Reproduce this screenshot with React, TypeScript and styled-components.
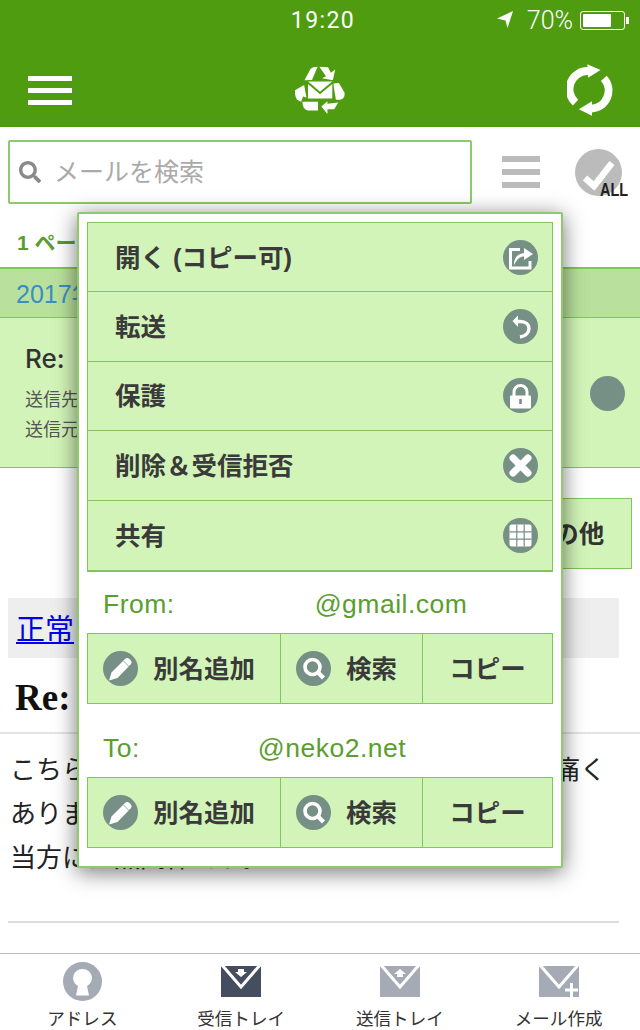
import React from 'react'
import styled, { createGlobalStyle } from 'styled-components'
import { FaSearch } from 'react-icons/fa'

const sans = `'Liberation Sans', 'Noto Sans CJK JP', sans-serif`
const serif = `'Liberation Serif', 'Noto Sans CJK JP', serif`
const badge = '#769085'

const GlobalStyle = createGlobalStyle`
  html, body {
    margin: 0;
    padding: 0;
    background: #fff;
    font-family: ${sans};
  }
  * { box-sizing: border-box; }
`

function RecycleLogo() {
  return (
    <LogoSvg viewBox="78 18 148 142">
      <g fill="#fff">
        <path d="M106 60 L124 27 Q130 20 145 20 L128 60 Z" />
        <path d="M150 20 L176 22 L184 38 L197 28 L190 60 L158 54 L170 48 L160 34 Z" />
        <path d="M191 70 L208 68 L224 96 Q228 112 212 118 L199 118 Z" />
        <path d="M100 124 L146 124 L146 150 L116 150 Q100 146 100 124 Z" />
        <path d="M156 138 L174 122 L174 130 L206 126 L194 146 L174 146 L174 160 Z" />
        <path d="M78 90 L105 74 L112 112 L102 108 L96 124 L84 118 Q76 104 78 90 Z" />
      </g>
      <path d="M115 62 H190 V116 H115 Z" fill="#fff" stroke="#4f9c10" strokeWidth="3" />
      <path d="M115 66 L152 98 L190 66" fill="none" stroke="#4f9c10" strokeWidth="6" />
    </LogoSvg>
  )
}

function RefreshIcon() {
  return (
    <RefreshSvg viewBox="36 25 140 157">
      <path d="M62 142 A55 55 0 0 1 102 46" fill="none" stroke="#fff" strokeWidth="24" />
      <path d="M148 68 A55 55 0 0 1 110 160" fill="none" stroke="#fff" strokeWidth="24" />
      <path d="M98 25 L138 43 L100 66 Z" fill="#fff" />
      <path d="M112 138 L72 162 L112 182 Z" fill="#fff" />
    </RefreshSvg>
  )
}

function LocationIcon() {
  return (
    <svg width="17" height="18" viewBox="0 0 17 18">
      <path d="M16 0 L0 7.5 L8.5 9.5 L10.5 17 Z" fill="#fff" />
    </svg>
  )
}

function CheckMark() {
  return (
    <svg width="47" height="47" viewBox="0 0 47 47">
      <path d="M10 29 L19 37 L37 14" fill="none" stroke="#fff" strokeWidth="6.5" />
    </svg>
  )
}

function ShareGlyph() {
  return (
    <svg width="35" height="35" viewBox="0 0 35 35">
      <path d="M17 9.5 H7.5 V28 H27 V21" fill="none" stroke="#fff" strokeWidth="3" />
      <path d="M11 25 C11 17 15 14 21 13 V8 L30 14 L21 20 V16.5 C17 16.5 14 19 11 25 Z" fill="#fff" />
    </svg>
  )
}

function ReplyGlyph() {
  return (
    <svg width="35" height="35" viewBox="0 0 35 35">
      <path d="M13 12.5 H17 C29 12.5 29 26 17 28" fill="none" stroke="#fff" strokeWidth="3.5" />
      <path d="M9.5 12 L15 6.5 V18 Z" fill="#fff" />
    </svg>
  )
}

function LockGlyph() {
  return (
    <svg width="35" height="35" viewBox="0 0 35 35">
      <path d="M11 18 V14 A6.5 6.5 0 0 1 24 14 V18" fill="none" stroke="#fff" strokeWidth="3" />
      <rect x="7" y="17.5" width="21" height="13" rx="1" fill="#fff" />
      <path d="M17.5 21 V26" stroke={badge} strokeWidth="2.6" />
    </svg>
  )
}

function CloseGlyph() {
  return (
    <svg width="35" height="35" viewBox="0 0 35 35">
      <path d="M10 10 L25 25 M25 10 L10 25" stroke="#fff" strokeWidth="7" strokeLinecap="round" />
    </svg>
  )
}

function GridGlyph() {
  return (
    <svg width="35" height="35" viewBox="0 0 35 35">
      <rect x="6.5" y="6.5" width="22" height="22" rx="2" fill="#fff" />
      <path d="M13.8 6.5 V28.5 M21.2 6.5 V28.5 M6.5 13.8 H28.5 M6.5 21.2 H28.5" stroke={badge} strokeWidth="1.2" />
    </svg>
  )
}

function PencilGlyph() {
  return (
    <svg width="35" height="35" viewBox="0 0 35 35">
      <path d="M6 29.5 L8.5 21.5 L22 8 Q24 6 27 8.5 Q29.5 11 28 13 L14.5 27 Z" fill="#fff" />
      <path d="M20.5 10 L26 15.5" stroke={badge} strokeWidth="0.8" />
    </svg>
  )
}

function LensGlyph() {
  return (
    <svg width="35" height="35" viewBox="0 0 35 35">
      <circle cx="16.5" cy="16" r="7.5" fill="none" stroke="#fff" strokeWidth="3.6" />
      <path d="M22 21.5 L27.5 27" stroke="#fff" strokeWidth="4.2" />
    </svg>
  )
}

function KeyholeIcon() {
  return (
    <svg width="39" height="39" viewBox="0 0 39 39">
      <circle cx="19.5" cy="19.5" r="19.5" fill="#a5abb5" />
      <path d="M19.5 7 A9 9 0 0 1 24 24 L26 33.5 H13 L15 24 A9 9 0 0 1 19.5 7 Z" fill="#fff" />
    </svg>
  )
}

function EnvelopeIcon({ kind, color }: { kind: 'in' | 'out' | 'new'; color: string }) {
  return (
    <svg width="40" height="31" viewBox="0 0 40 31">
      <rect width="40" height="31" fill={color} />
      <path d="M1 -1 L20 21 L39 -1" fill="none" stroke="#fff" strokeWidth="3" />
      {kind === 'in' && <path d="M17 3 H23 V6 H26 L20 11 L14 6 H17 Z" fill="#fff" />}
      {kind === 'out' && <path d="M20 3 L26 8 H23 V11 H17 V8 H14 Z" fill="#fff" />}
      {kind === 'new' && <path d="M32.5 17 V31 M26 24 H39" stroke="#fff" strokeWidth="3" />}
    </svg>
  )
}

function MailOptions({ label, address, offset }: { label: string; address: string; offset: number }) {
  return (
    <>
      <AddressLine>
        {label}
        <Address $offset={offset}>{address}</Address>
      </AddressLine>
      <ActionRow>
        <ActionCell $width={193}>
          <Round>
            <PencilGlyph />
          </Round>
          <Label>別名追加</Label>
        </ActionCell>
        <ActionCell $width={142}>
          <Round>
            <LensGlyph />
          </Round>
          <Label>検索</Label>
        </ActionCell>
        <ActionCell $width={129} $center>
          <Label>コピー</Label>
        </ActionCell>
      </ActionRow>
    </>
  )
}

const menu = [
  { label: '開く (コピー可)', icon: <ShareGlyph /> },
  { label: '転送', icon: <ReplyGlyph /> },
  { label: '保護', icon: <LockGlyph /> },
  { label: '削除＆受信拒否', icon: <CloseGlyph /> },
  { label: '共有', icon: <GridGlyph /> },
]

const tabs = [
  { label: 'アドレス', icon: <KeyholeIcon /> },
  { label: '受信トレイ', icon: <EnvelopeIcon kind="in" color="#454e5e" /> },
  { label: '送信トレイ', icon: <EnvelopeIcon kind="out" color="#a5abb5" /> },
  { label: 'メール作成', icon: <EnvelopeIcon kind="new" color="#a5abb5" /> },
]

export default function App() {
  return (
    <Page>
      <GlobalStyle />
      <Header>
        <StatusBar>
          <span />
          <Clock>19:20</Clock>
          <StatusRight>
            <LocationIcon />
            <Percent>70%</Percent>
            <Battery>
              <BatteryFill />
            </Battery>
            <BatteryNub />
          </StatusRight>
        </StatusBar>
        <NavBar>
          <Burger $color="#fff" $width={44} $bar={5} $gap={7} />
          <RecycleLogo />
          <RefreshIcon />
        </NavBar>
      </Header>

      <Main>
        <SearchRow>
          <SearchBox>
            <FaSearch size={22} color="#8a8a8a" />
            <Label>メールを検索</Label>
          </SearchBox>
          <ListToggle $color="#bbb" $width={38} $bar={6} $gap={7} />
          <CheckAll>
            <CheckMark />
            <AllTag>ALL</AllTag>
          </CheckAll>
        </SearchRow>
        <Pager>1 ページ</Pager>
        <DateBar>2017年</DateBar>
        <MailCard>
          <div>
            <CardTitle>Re:</CardTitle>
            <CardMeta>送信先</CardMeta>
            <CardMeta>送信元</CardMeta>
          </div>
          <Round />
        </MailCard>
        <ButtonRow>
          <OtherButton>
            <Label>その他</Label>
          </OtherButton>
        </ButtonRow>
        <NoticeBox>
          <NoticeLink href="#">正常</NoticeLink>
        </NoticeBox>
        <Subject>Re:</Subject>
        <Body>
          <BodyLine>
            こちら
            <Gap />
            痛く
          </BodyLine>
          <BodyLine>ありま</BodyLine>
          <BodyLine>当方には無関係です。</BodyLine>
        </Body>
        <Rule />
      </Main>

      <TabBar>
        {tabs.map((tab) => (
          <Tab key={tab.label}>
            <TabIcon>{tab.icon}</TabIcon>
            {tab.label}
          </Tab>
        ))}
      </TabBar>

      <Popup>
        <MenuList>
          {menu.map((item) => (
            <MenuRow key={item.label}>
              <Label>{item.label}</Label>
              <Round>{item.icon}</Round>
            </MenuRow>
          ))}
        </MenuList>
        <MailOptions label="From:" address="@gmail.com" offset={140} />
        <MailOptions label="To:" address="@neko2.net" offset={118} />
      </Popup>
    </Page>
  )
}

const Page = styled.div`
  position: relative;
  width: 640px;
  height: 1030px;
  display: flex;
  flex-direction: column;
  overflow: hidden;
  background: #fff;
`

const Header = styled.header`
  height: 127px;
  background: #4f9c10;
  color: #fff;
`

const StatusBar = styled.div`
  height: 40px;
  display: grid;
  grid-template-columns: 1fr auto 1fr;
  align-items: center;
  font-family: Roboto, sans-serif;
  font-weight: 300;
`

const Clock = styled.div`
  padding-left: 6px;
  font-size: 23px;
  font-weight: 400;
  letter-spacing: 1.4px;
`

const StatusRight = styled.div`
  display: flex;
  align-items: center;
  justify-content: flex-end;
  padding-right: 11px;
`

const Percent = styled.span`
  margin: 0 7px 0 13px;
  font-size: 25px;
`

const Battery = styled.div`
  width: 45px;
  height: 19px;
  padding: 2px;
  border: 1px solid #fff;
  border-radius: 3px;
`

const BatteryFill = styled.div`
  width: 28px;
  height: 100%;
  background: #fff;
  border-radius: 1px;
`

const BatteryNub = styled.div`
  width: 3px;
  height: 7px;
  margin-left: 1px;
  background: #fff;
`

const NavBar = styled.div`
  height: 87px;
  display: flex;
  align-items: center;
  justify-content: space-between;
  padding: 13px 27px 0 28px;
`

const Burger = styled.div<{ $color: string; $width: number; $bar: number; $gap: number }>`
  width: ${(p) => p.$width}px;
  height: ${(p) => p.$bar * 3 + p.$gap * 2}px;
  background: repeating-linear-gradient(
    to bottom,
    ${(p) => p.$color} 0,
    ${(p) => p.$color} ${(p) => p.$bar}px,
    transparent ${(p) => p.$bar}px,
    transparent ${(p) => p.$bar + p.$gap}px
  );
`

const ListToggle = styled(Burger)`
  margin-right: 5px;
`

const LogoSvg = styled.svg`
  width: 50px;
  height: 48px;
`

const RefreshSvg = styled.svg`
  width: 46px;
  height: 52px;
`

const Main = styled.main`
  flex: 1;
  min-height: 0;
`

const SearchRow = styled.div`
  display: flex;
  align-items: center;
  gap: 30px;
  padding: 13px 18px 0 8px;
`

const SearchBox = styled.div`
  flex: none;
  width: 464px;
  height: 64px;
  display: flex;
  align-items: center;
  gap: 13px;
  padding-left: 9px;
  border: 2px solid #8ccb6c;
  border-radius: 2px;
  font-size: 25px;
  color: #aaa;
`

const Label = styled.span`
  padding-bottom: 4px;
`

const CheckAll = styled.div`
  position: relative;
  flex: none;
  width: 47px;
  height: 47px;
  border-radius: 50%;
  background: #bbb;
`

const AllTag = styled.span`
  position: absolute;
  left: 25px;
  top: 30px;
  font-size: 19px;
  line-height: 22px;
  font-weight: bold;
  color: #222;
  transform: scaleX(0.76);
  transform-origin: left center;
`

const Pager = styled.div`
  height: 63px;
  padding: 22px 0 0 17px;
  font-size: 21px;
  font-weight: bold;
  color: #5a9e2e;
`

const DateBar = styled.div`
  height: 51px;
  display: flex;
  align-items: center;
  padding: 0 0 3px 16px;
  border-top: 2px solid #82c55f;
  border-bottom: 1px solid #82c55f;
  background: #b9e09c;
  font-size: 25px;
  color: #3a8fc0;
`

const MailCard = styled.div`
  height: 150px;
  display: flex;
  align-items: center;
  justify-content: space-between;
  padding: 2px 15px 0 25px;
  border-bottom: 1px solid #82c55f;
  background: #d3f4b8;
`

const CardTitle = styled.div`
  margin-bottom: 11px;
  font-family: Inter, sans-serif;
  font-size: 26px;
  font-weight: 500;
  color: #333;
`

const CardMeta = styled.div`
  font-size: 18px;
  line-height: 30px;
  color: #555;
`

const ButtonRow = styled.div`
  display: flex;
  justify-content: flex-end;
  padding: 30px 8px 0;
`

const OtherButton = styled.div`
  width: 132px;
  height: 71px;
  display: flex;
  align-items: center;
  justify-content: center;
  border: 1px solid #82c55f;
  background: #d3f4b8;
  font-size: 25.5px;
  font-weight: bold;
  color: #333;
`

const NoticeBox = styled.div`
  width: 611px;
  height: 60px;
  margin: 29px 0 0 8px;
  padding: 0 0 3px 8px;
  display: flex;
  align-items: center;
  background: #eee;
`

const NoticeLink = styled.a`
  font-family: ${serif};
  font-size: 29px;
  color: #00e;
`

const Subject = styled.h1`
  margin: 0;
  height: 76px;
  padding: 20px 0 0 15px;
  border-bottom: 2px solid #e4e4e4;
  font-family: ${serif};
  font-size: 37px;
  line-height: 40px;
  color: #111;
`

const Body = styled.div`
  padding: 15px 34px 0 10px;
  font-family: ${serif};
  font-size: 26px;
  line-height: 44px;
  color: #222;
`

const BodyLine = styled.div`
  display: flex;
  justify-content: space-between;
`

const Gap = styled.span`
  flex: 1;
`

const Rule = styled.div`
  width: 611px;
  height: 2px;
  margin: 40px 0 0 8px;
  background: #ddd;
`

const TabBar = styled.nav`
  height: 77px;
  display: grid;
  grid-template-columns: repeat(4, 1fr);
  padding: 0 2px 0 3px;
  border-top: 1px solid #bbb;
  background: #fff;
`

const Tab = styled.div`
  display: flex;
  flex-direction: column;
  align-items: center;
  font-size: 17.6px;
  line-height: 22px;
  color: #333;
`

const TabIcon = styled.div`
  height: 54px;
  display: flex;
  align-items: center;
`

const Popup = styled.div`
  position: absolute;
  left: 77px;
  top: 212px;
  width: 486px;
  height: 656px;
  padding: 8px;
  border: 2px solid #8ccb6c;
  border-radius: 2px;
  background: #fff;
  box-shadow: 0 4px 22px rgba(0, 0, 0, 0.55);
`

const MenuList = styled.div`
  border: 1px solid #82c55f;
  border-bottom-width: 2px;
`

const MenuRow = styled.div`
  height: 69.4px;
  display: flex;
  align-items: center;
  justify-content: space-between;
  padding: 0 14px 0 27px;
  border-bottom: 1px solid #82c55f;
  background: #d3f4b8;
  font-size: 25.5px;
  font-weight: bold;
  color: #3a3a3a;

  &:last-child {
    border-bottom: 0;
  }
`

const Round = styled.span`
  flex: none;
  width: 35px;
  height: 35px;
  display: inline-flex;
  border-radius: 50%;
  background: ${badge};
`

const AddressLine = styled.div`
  height: 61px;
  padding: 17px 0 0 16px;
  font-size: 26.5px;
  line-height: 30px;
  letter-spacing: 0.5px;
  color: #5a9e2e;
`

const Address = styled.span<{ $offset: number }>`
  margin-left: ${(p) => p.$offset}px;
`

const ActionRow = styled.div`
  display: flex;
  height: 71px;
  margin-bottom: 12px;
  border: 1px solid #82c55f;
  background: #d3f4b8;
`

const ActionCell = styled.div<{ $width: number; $center?: boolean }>`
  flex: none;
  width: ${(p) => p.$width}px;
  display: flex;
  align-items: center;
  gap: 15px;
  padding-left: ${(p) => (p.$center ? 0 : 15)}px;
  justify-content: ${(p) => (p.$center ? 'center' : 'flex-start')};
  border-right: 1px solid #82c55f;
  font-size: 25.5px;
  font-weight: bold;
  color: #3a3a3a;

  &:last-child {
    border-right: 0;
  }
`
